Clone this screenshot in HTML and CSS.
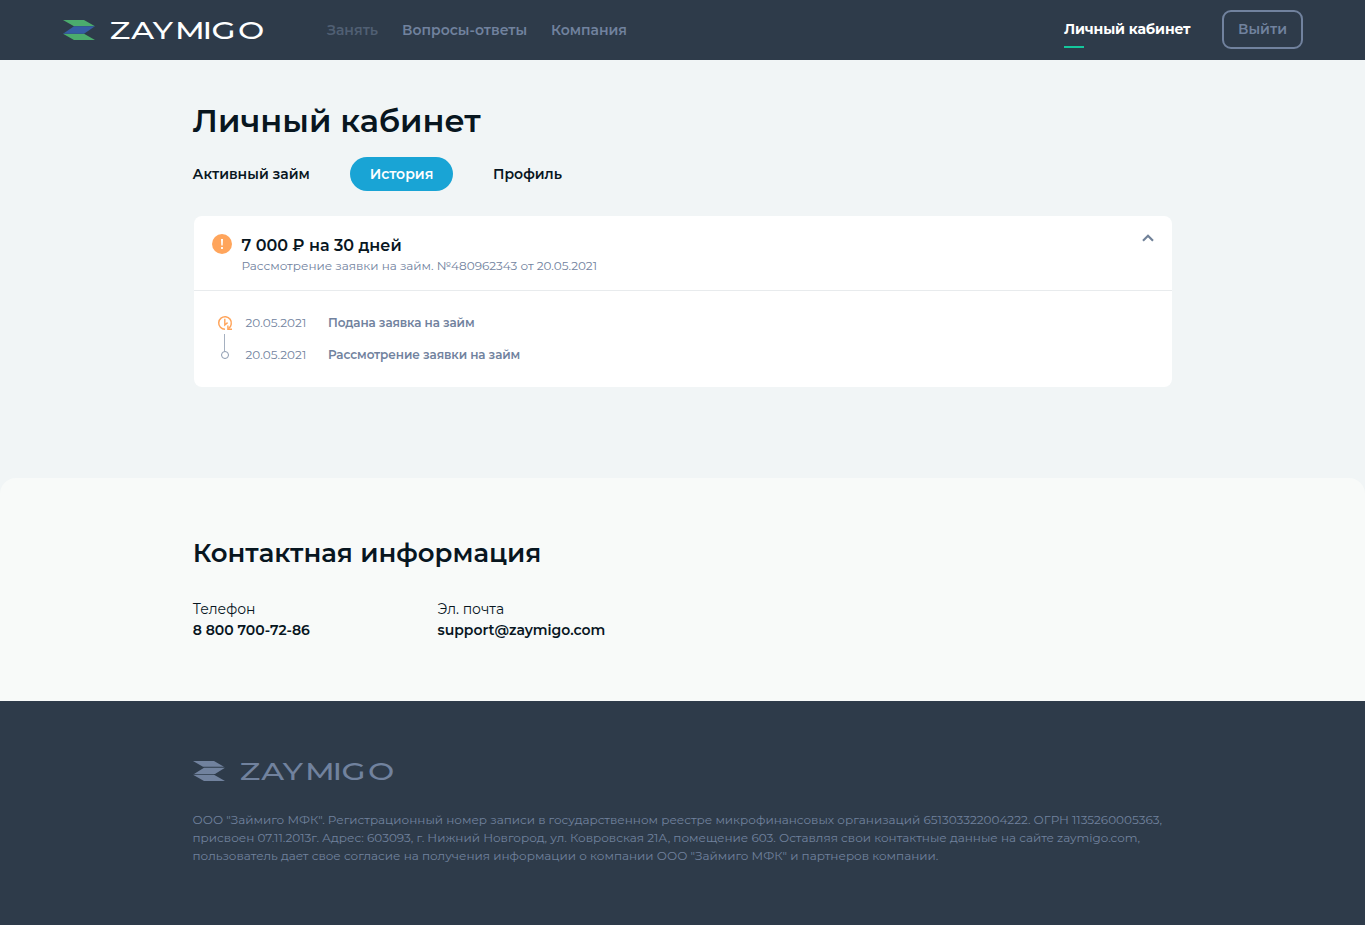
FILE: index.html
```html
<!DOCTYPE html>
<html lang="ru">
<head>
<meta charset="utf-8">
<title>Личный кабинет</title>
<link rel="stylesheet" href="styles.css">
</head>
<body>
<header class="header">
  <a class="logo">
    <svg width="32" height="20" viewBox="0 0 32 20"><path fill="#4bab6d" d="M0 0h21l11 6.3H11zM0 13.7h21L32 20H11z"/><path fill="#355ca3" d="M11 6.3h21l-11 7.4H0z"/></svg>
    <svg class="wordmark" width="153" height="32" viewBox="0 -6 153 32"><text class="wordmark-text" transform="scale(1.3 1)" y="19" x="-1 15.5 32.2 49.3 70.4 77.4 97.6">ZAYMIGO</text></svg>
  </a>
  <nav class="nav">
    <a class="nav-borrow">Занять</a>
    <a class="nav-faq">Вопросы-ответы</a>
    <a>Компания</a>
  </nav>
  <div class="account">
    <a class="account-link">Личный кабинет</a>
    <a class="logout">Выйти</a>
  </div>
</header>
<main class="main">
  <h1 class="title">Личный кабинет</h1>
  <div class="tabs">
    <a class="tab-loan">Активный займ</a>
    <a class="tab-active">История</a>
    <a>Профиль</a>
  </div>
  <section class="card">
    <div class="card-head">
      <svg class="alert" width="20" height="20" viewBox="0 0 20 20"><circle cx="10" cy="10" r="10" fill="#ffa55c"/><path fill="#fff" d="M9 5h2l-.3 6.5H9.3zM9.1 13h1.8v2H9.1z"/></svg>
      <div class="card-info">
        <div class="amount">7 000 ₽ на 30 дней</div>
        <div class="status">Рассмотрение заявки на займ. №480962343 от 20.05.2021</div>
      </div>
      <svg class="chevron" width="12" height="8" viewBox="0 0 12 8"><path fill="none" stroke="#718299" stroke-width="2.2" d="M1 6.8L6 1.8l5 5"/></svg>
    </div>
    <div class="timeline">
      <div class="event">
        <svg class="clock" width="16" height="16" viewBox="0 0 16 16" fill="none" stroke="#ffa55c" stroke-width="1.5"><path d="M8 14.3A6.3 6.3 0 1 1 14.2 9.2Q14 12 11.4 13.6"/><path d="M7.8 3.8v6.2l2.8-2.4" stroke-width="1.4"/><path d="M10.9 10.4v3.8H15" stroke-width="1.4"/></svg>
        <span class="date">20.05.2021</span><span class="event-name">Подана заявка на займ</span>
      </div>
      <div class="event">
        <span class="dot"></span>
        <span class="date">20.05.2021</span><span class="event-name">Рассмотрение заявки на займ</span>
      </div>
    </div>
  </section>
</main>
<section class="contacts">
  <h2 class="subtitle">Контактная информация</h2>
  <div class="contact-grid">
    <div><div class="label">Телефон</div><div class="value">8 800 700-72-86</div></div>
    <div><div class="label">Эл. почта</div><div class="value">support@zaymigo.com</div></div>
  </div>
</section>
<footer class="footer">
  <div class="logo footer-logo">
    <svg width="32" height="20" viewBox="0 0 32 20" fill="#71829e"><path d="M0 0h21l10 5.8H10zM11 6.7h21l-10 6.2H1zM0 13.8h21L32 20H11z"/></svg>
    <svg class="wordmark" width="153" height="32" viewBox="0 -6 153 32"><text class="wordmark-text" transform="scale(1.3 1)" y="19" x="-1 15.5 32.2 49.3 70.4 77.4 97.6">ZAYMIGO</text></svg>
  </div>
  <p class="legal"><span>ООО "Займиго МФК". Регистрационный номер записи в государственном реестре микрофинансовых организаций 651303322004222. ОГРН 1135260005363,</span> <span>присвоен 07.11.2013г. Адрес: 603093, г. Нижний Новгород, ул. Ковровская 21А, помещение 603. Оставляя свои контактные данные на сайте zaymigo.com,</span> <span>пользователь дает свое согласие на получения информации о компании ООО "Займиго МФК" и партнеров компании.</span></p>
</footer>
</body>
</html>
```

FILE: styles.css
```css
* { box-sizing: border-box; }
body { margin: 0; background: #f1f5f6; color: #08161f; font: 600 14px/18px Montserrat, Inter, sans-serif; }
a, .amount, .status, .date, .event-name, .label, .value, .legal span, h1, h2 { white-space: nowrap; }

.header { height: 60px; padding: 0 62px 0 63px; background: #2e3b4a; display: flex; align-items: center; }
.logo { display: flex; align-items: center; height: 20px; gap: 16px; color: #fff; }
.wordmark { display: block; overflow: visible; }
.wordmark-text { font: 500 24px Montserrat, Inter, sans-serif; fill: currentColor; }
.nav { display: flex; gap: 24px; margin-left: 63px; color: #71829e; }
.nav-borrow { width: 51px; color: #505f73; }
.nav-faq { width: 125px; }
.account { display: flex; align-items: center; height: 39px; margin: 0 0 1px auto; gap: 32px; }
.account-link { color: #fff; width: 126px; height: 38px; padding-top: 9px; letter-spacing: -0.13px; font-weight: 700; }
.account-link::after { content: ""; display: block; width: 20px; height: 2px; margin-top: 8px; background: #14c79c; }
.logout { width: 81px; height: 39px; padding-bottom: 2px; border: 2px solid #71829e; border-radius: 9px; color: #71829e; display: flex; align-items: center; justify-content: center; }

.main { width: 979.5px; height: 418px; margin-left: 192.5px; padding-top: 41px; }
.title { margin: 0; font-size: 32px; line-height: 40px; font-weight: 600; }
.tabs { display: flex; align-items: center; margin-top: 16px; height: 34px; }
.tab-loan { width: 157.5px; }
.tab-active { width: 103px; height: 34px; margin-right: 40px; border-radius: 17px; background: #19a4d5; color: #fff; display: flex; align-items: center; justify-content: center; }
.card { margin: 25px 0 0 1.5px; height: 171px; border-radius: 8px; background: #fff; }
.card-head { height: 75px; border-bottom: 1px solid #e8ebed; padding: 18px 18px 0; display: flex; align-items: flex-start; }
.card-info { margin-left: 9.5px; padding-top: 2px; }
.amount { font-size: 16px; line-height: 20px; }
.status { font-size: 12px; line-height: 18px; margin-top: 1px; font-weight: 400; color: #71829e; }
.chevron { margin-left: auto; }
.timeline { padding: 23px 0 0 23px; font-size: 12px; color: #71829e; }
.event { display: flex; align-items: center; height: 18px; }
.event + .event { margin-top: 14px; }
.event-name { font-weight: 600; letter-spacing: -0.1px; }
.clock { width: 16px; height: 16px; }
.dot { width: 8px; height: 8px; margin: 0 4px; border: 1.5px solid #8c9aaf; border-radius: 50%; position: relative; }
.dot::before { content: ""; position: absolute; left: 2px; bottom: 7px; width: 1px; height: 17px; background: #a5b0c0; }
.date { width: 82.5px; margin-left: 12.5px; font-weight: 400; letter-spacing: 0.05px; }

.contacts { height: 223px; padding: 59px 192.7px 0; background: #f8faf9; border-radius: 16px 16px 0 0; }
.subtitle { margin: 0; font-size: 26px; line-height: 32px; font-weight: 600; }
.contact-grid { display: grid; grid-template-columns: 244.8px 1fr; margin-top: 30px; }
.label { font-weight: 400; line-height: 21px; }
.value { line-height: 21px; }

.footer { height: 224px; padding: 60px 192.5px 0; background: #2e3b4a; color: #71829e; }
.footer-logo { color: #71829e; padding-left: 0.5px; }
.legal { margin: 30px 0 0; font-size: 12px; font-weight: 400; }
.legal span { display: block; }
```
